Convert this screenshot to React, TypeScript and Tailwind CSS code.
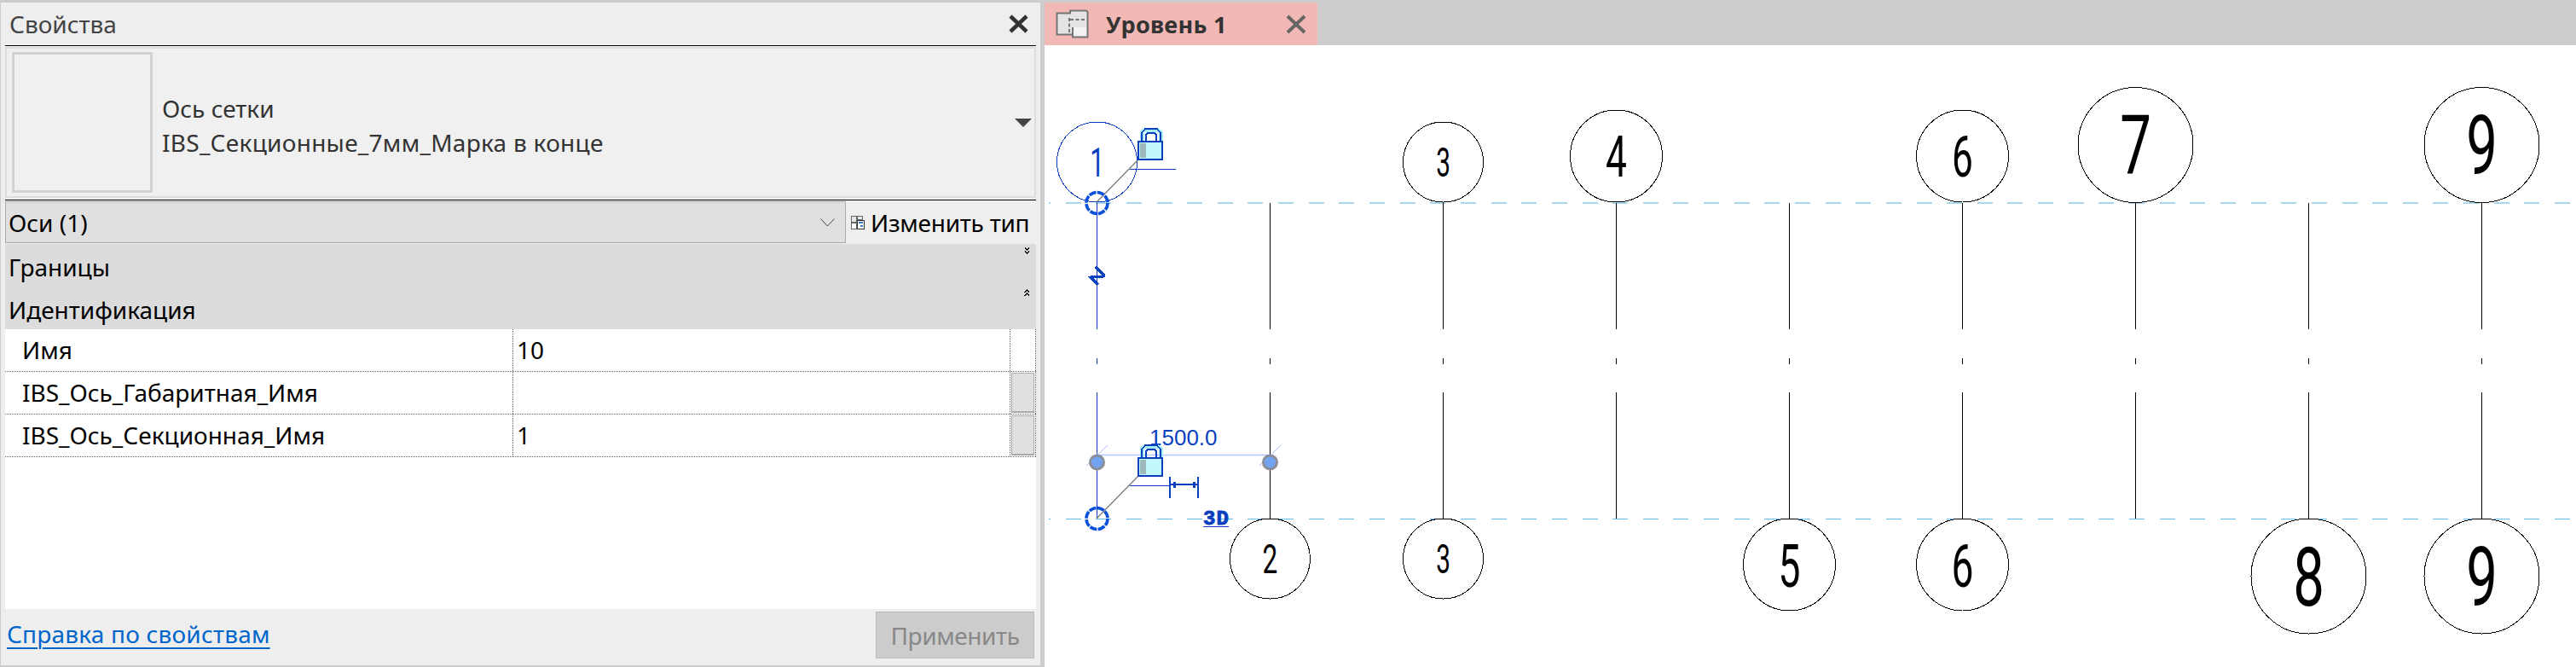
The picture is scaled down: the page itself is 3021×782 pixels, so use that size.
import React from "react";

const BLUE = "#0a3fc0";
const AXES = [1286.5, 1489.5, 1692.5, 1895.5, 2098.5, 2301.5, 2504.5, 2707.5, 2910.5];

type Bubble = { n: string; x: number; y: number; r: number; size: number; base: number; sx: number };
const BUBBLES: Bubble[] = [
  { n: "3", x: 1692.5, y: 190, r: 47, size: 48, base: 207, sx: 0.62 },
  { n: "4", x: 1895.5, y: 183, r: 54, size: 67, base: 207, sx: 0.66 },
  { n: "6", x: 2301.5, y: 183, r: 54, size: 67, base: 207, sx: 0.66 },
  { n: "7", x: 2504.5, y: 170, r: 67.5, size: 96, base: 204, sx: 0.68 },
  { n: "9", x: 2910.5, y: 170, r: 67.5, size: 96, base: 204, sx: 0.68 },
  { n: "2", x: 1489.5, y: 655, r: 47, size: 48, base: 672, sx: 0.66 },
  { n: "3", x: 1692.5, y: 655, r: 47, size: 48, base: 672, sx: 0.62 },
  { n: "5", x: 2098.5, y: 662, r: 54, size: 70, base: 688, sx: 0.66 },
  { n: "6", x: 2301.5, y: 662, r: 54, size: 70, base: 688, sx: 0.66 },
  { n: "8", x: 2707.5, y: 675.5, r: 67.5, size: 96, base: 710, sx: 0.68 },
  { n: "9", x: 2910.5, y: 675.5, r: 67.5, size: 96, base: 710, sx: 0.68 },
];

function Lock({ y }: { y: number }) {
  return (
    <g shapeRendering="crispEdges">
      <path d={`M1339 ${y + 15} V${y + 4} L1343 ${y + 1} H1357 L1361 ${y + 4} V${y + 15}`} fill="none" stroke="#a8ecf5" strokeWidth="5" />
      <path d={`M1339 ${y + 15} V${y + 5} L1343 ${y} H1357 L1361 ${y + 5} V${y + 15}`} fill="none" stroke={BLUE} strokeWidth="1.5" />
      <path d={`M1344 ${y + 15} V${y + 7} L1346 ${y + 5} H1354 L1356 ${y + 7} V${y + 15}`} fill="none" stroke={BLUE} strokeWidth="2" />
      <rect x="1335" y={y + 15} width="28" height="21" fill="#c2f8fb" stroke={BLUE} strokeWidth="2.5" />
      <rect x="1337" y={y + 17} width="7" height="17" fill="#9fb9ba" />
    </g>
  );
}

function Handle({ y }: { y: number }) {
  return (
    <circle cx="1286.5" cy={y} r="12.5" fill="none" stroke="#0a50d8" strokeWidth="3.6" strokeDasharray="8.5 1.3" />
  );
}

function Canvas() {
  return (
    <svg className="block" width="1796" height="729" viewBox="1225 53 1796 729">
      {/* level lines */}
      <line x1="1230" x2="3021" y1="237.5" y2="237.5" stroke="#a8d8ee" strokeWidth="2" strokeDasharray="18 17.64" strokeDashoffset="16" shapeRendering="crispEdges" />
      <line x1="1230" x2="3021" y1="608.5" y2="608.5" stroke="#5cc0f0" strokeWidth="1" strokeDasharray="18 17.64" strokeDashoffset="16" shapeRendering="crispEdges" />
      {/* axes */}
      {AXES.map((x, i) => {
        const c = i === 0 ? BLUE : "#000";
        return (
          <g key={x} stroke={c} strokeWidth="1" shapeRendering="crispEdges">
            <line x1={x} x2={x} y1="238" y2="386" />
            <line x1={x} x2={x} y1="420" y2="427" />
            <line x1={x} x2={x} y1="460" y2="608" />
          </g>
        );
      })}
      {/* bubbles */}
      {BUBBLES.map((b) => (
        <g key={b.n + b.x + b.y}>
          <circle cx={b.x} cy={b.y} r={b.r} fill="#fff" stroke="#000" strokeWidth="1" shapeRendering="crispEdges" />
          <text
            transform={`translate(${b.x} ${b.base}) scale(${b.sx} 1)`}
            textAnchor="middle"
            fontFamily="Roboto, sans-serif"
            fontSize={b.size}
            fill="#000"
          >
            {b.n}
          </text>
        </g>
      ))}

      {/* selected axis, head */}
      <circle cx="1286.5" cy="190" r="47" fill="none" stroke={BLUE} strokeWidth="1" shapeRendering="crispEdges" />
      <text transform="translate(1286.5 207) scale(0.62 1)" textAnchor="middle" fontFamily="Roboto, sans-serif" fontSize="48" fill={BLUE}>
        1
      </text>
      <line x1="1286" y1="237" x2="1335" y2="187" stroke="#777" strokeWidth="1.2" />
      <line x1="1325" x2="1379" y1="198.5" y2="198.5" stroke={BLUE} strokeWidth="1" shapeRendering="crispEdges" />
      <Lock y={151} />
      <Handle y={238} />
      <path d="M1285 313 L1294 322 V324 L1279 325 L1288 334" fill="none" stroke={BLUE} strokeWidth="3" shapeRendering="crispEdges" />

      {/* selected axis, foot */}
      <line x1="1286.5" x2="1489.5" y1="533.5" y2="533.5" stroke="#b0c6ff" strokeWidth="1.5" />
      <line x1="1274" y1="546" x2="1299" y2="522" stroke="#a4bfff" strokeWidth="1" />
      <line x1="1477" y1="546" x2="1502" y2="522" stroke="#a4bfff" strokeWidth="1" />
      <circle cx="1286.5" cy="542" r="8" fill="#72a3f2" stroke="#8a8f99" strokeWidth="3" />
      <circle cx="1489.5" cy="542" r="8" fill="#72a3f2" stroke="#8a8f99" strokeWidth="3" />
      <text x="1348" y="522" fontFamily="'Liberation Sans', sans-serif" fontSize="26" fill={BLUE}>
        1500.0
      </text>
      <line x1="1286" y1="608" x2="1335" y2="558" stroke="#777" strokeWidth="1.2" />
      <Lock y={522} />
      <Handle y={608} />
      <g stroke={BLUE} shapeRendering="crispEdges">
        <line x1="1325" x2="1372" y1="569.5" y2="569.5" strokeWidth="1" />
        <line x1="1372" x2="1372" y1="559" y2="584" strokeWidth="2" />
        <line x1="1405" x2="1405" y1="559" y2="584" strokeWidth="2" />
        <line x1="1372" x2="1405" y1="568" y2="568" strokeWidth="2" />
        <line x1="1377" x2="1377" y1="565" y2="572" strokeWidth="3" />
        <line x1="1400" x2="1400" y1="565" y2="572" strokeWidth="3" />
        <line x1="1411" x2="1441" y1="617" y2="617" strokeWidth="1" />
      </g>
      <text x="1411" y="615" fontFamily="'Liberation Mono', monospace" fontSize="24" fontWeight="700" fill={BLUE} stroke={BLUE} strokeWidth="0.9" letterSpacing="1">
        3D
      </text>
    </svg>
  );
}

function TabIcon() {
  return (
    <svg width="39" height="34" viewBox="0 0 39 34" className="block">
      <path d="M1.5 4.5 H17 V1.5 H36 L37.5 3 V32.5 H20 V29.5 H1.5 Z" fill="#e4e4e4" stroke="#777" strokeWidth="2" />
      <rect x="20" y="21" width="16" height="10" fill="#f2f2f2" />
      <path d="M16 10 V27 M17 12 H36" stroke="#777" strokeWidth="2" strokeDasharray="4 2.5" fill="none" />
      <path d="M20 21 V32" stroke="#777" strokeWidth="2" />
    </svg>
  );
}

function ChangeTypeIcon() {
  return (
    <svg width="16" height="16" viewBox="0 0 16 16" className="block shrink-0" shapeRendering="crispEdges">
      <g fill="#fff" stroke="#666" strokeWidth="1">
        <rect x="0.5" y="0.5" width="6" height="7" fill="#e8e8e8" />
        <rect x="7.5" y="0.5" width="6" height="4" fill="#e8e8e8" />
        <rect x="0.5" y="8.5" width="6" height="7" />
        <rect x="7.5" y="5.5" width="8" height="10" stroke="#333" />
      </g>
      <rect x="9" y="7" width="5" height="2" fill="#3b78c4" />
      <rect x="11" y="11" width="3" height="2" fill="#3b78c4" />
    </svg>
  );
}

function DoubleChevron({ up }: { up?: boolean }) {
  return (
    <svg width="7" height="9" viewBox="0 0 7 9" className="block" shapeRendering="crispEdges">
      <path d={up ? "M1 4 L3.5 1 L6 4 M1 8 L3.5 5 L6 8" : "M1 1 L3.5 4 L6 1 M1 5 L3.5 8 L6 5"} fill="none" stroke="#000" strokeWidth="1.4" />
    </svg>
  );
}

function Row({ label, value, btn }: { label: string; value: string; btn?: boolean }) {
  return (
    <div className="flex h-[50px] border-b border-dotted border-[#666]">
      <div className="w-[596px] pl-[20px] pb-[2px] flex items-center border-r border-dotted border-[#666]">{label}</div>
      <div className="w-[583px] pl-[4px] pb-[2px] flex items-center border-r border-dotted border-[#666]">{value}</div>
      <div className="flex-1 border-r border-dotted border-[#666] p-px">
        {btn ? <div className="h-full bg-[#e0e0e0] border border-b-2 border-[#aaa]" /> : null}
      </div>
    </div>
  );
}

export default function App() {
  return (
    <div className="flex w-[3021px] h-[782px] bg-[#cccccc] overflow-hidden text-[28px] leading-none text-black [font-family:'Noto_Sans',sans-serif]">
      <div className="ml-px mt-[3px] mb-[2px] w-[1219px] bg-[#eeeeee] flex flex-col px-[5px]">
        <div className="h-[50px] flex items-center justify-between pl-[5px] pr-[9px] text-[#444]">
          <span>Свойства</span>
          <svg width="23" height="22" viewBox="0 0 23 22" className="block">
            <path d="M2 2 L21 20 M21 2 L2 20" stroke="#333" strokeWidth="4.5" />
          </svg>
        </div>
        <div className="h-px bg-black" />
        <div className="mt-px h-[177px] bg-[#f0f0f0] border-2 border-[#dddddd] flex items-center pl-[6px] pr-[3px] text-[#333]">
          <div className="w-[165px] h-[165px] border-[3px] border-[#d2d2d2]" />
          <div className="ml-[11px] mt-[7px] flex-1 flex flex-col gap-[12px]">
            <span>Ось сетки</span>
            <span className="tracking-[0.28px]">IBS_Секционные_7мм_Марка в конце</span>
          </div>
          <svg width="20" height="10" viewBox="0 0 20 10" className="block">
            <path d="M0 0 H20 L10 10 Z" fill="#444" />
          </svg>
        </div>
        <div className="mt-[2px] h-px bg-black" />
        <div className="mt-px h-[49px] flex items-stretch">
          <div className="w-[986px] bg-[#e0e0e0] border border-[#aaaaaa] flex items-center justify-between pl-[3px] pr-[12px]">
            <span>Оси (1)</span>
            <svg width="17" height="10" viewBox="0 0 17 10" className="block">
              <path d="M0.5 0.5 L8.5 9 L16.5 0.5" fill="none" stroke="#444" strokeWidth="1" />
            </svg>
          </div>
          <div className="flex-1 flex items-center pl-[6px] gap-[7px]">
            <ChangeTypeIcon />
            <span className="tracking-[-0.25px]">Изменить тип</span>
          </div>
        </div>
        <div className="mt-px bg-[#dcdcdc]">
          <div className="h-[50px] flex justify-between pl-[4px] pr-[7px]">
            <span className="pt-[13px]">Границы</span>
            <div className="pt-[3px]"><DoubleChevron /></div>
          </div>
          <div className="h-[50px] flex justify-between pl-[4px] pr-[7px]">
            <span className="pt-[13px]">Идентификация</span>
            <div className="pt-[3px]"><DoubleChevron up /></div>
          </div>
        </div>
        <div className="flex-1 bg-white flex flex-col">
          <Row label="Имя" value="10" />
          <Row label="IBS_Ось_Габаритная_Имя" value="" btn />
          <Row label="IBS_Ось_Секционная_Имя" value="1" btn />
        </div>
        <div className="h-[66px] flex items-start justify-between">
          <a className="mt-[15px] ml-[2px] text-[#0066cc] underline underline-offset-[5px] decoration-2 tracking-[0.2px]" href="#">
            Справка по свойствам
          </a>
          <div className="mt-[3px] mr-[2px] w-[186px] h-[55px] bg-[#cccccc] border border-[#bbbbbb] flex items-center justify-center text-[#888888] tracking-[-0.4px]">
            Применить
          </div>
        </div>
      </div>
      <div className="ml-[5px] flex-1 flex flex-col">
        <div className="h-[53px] pt-[3px] flex">
          <div className="w-[320px] bg-[#f2b8b5] flex items-center pl-[13px] text-[#333333]">
            <TabIcon />
            <span className="ml-[20px] font-bold text-[27px] tracking-[0.3px] whitespace-nowrap w-[211px]">Уровень 1</span>
            <svg width="24" height="23" viewBox="0 0 24 23" className="block">
              <path d="M2 2 L22 21 M22 2 L2 21" stroke="#666" strokeWidth="4" />
            </svg>
          </div>
        </div>
        <div className="flex-1 bg-white">
          <Canvas />
        </div>
      </div>
    </div>
  );
}
